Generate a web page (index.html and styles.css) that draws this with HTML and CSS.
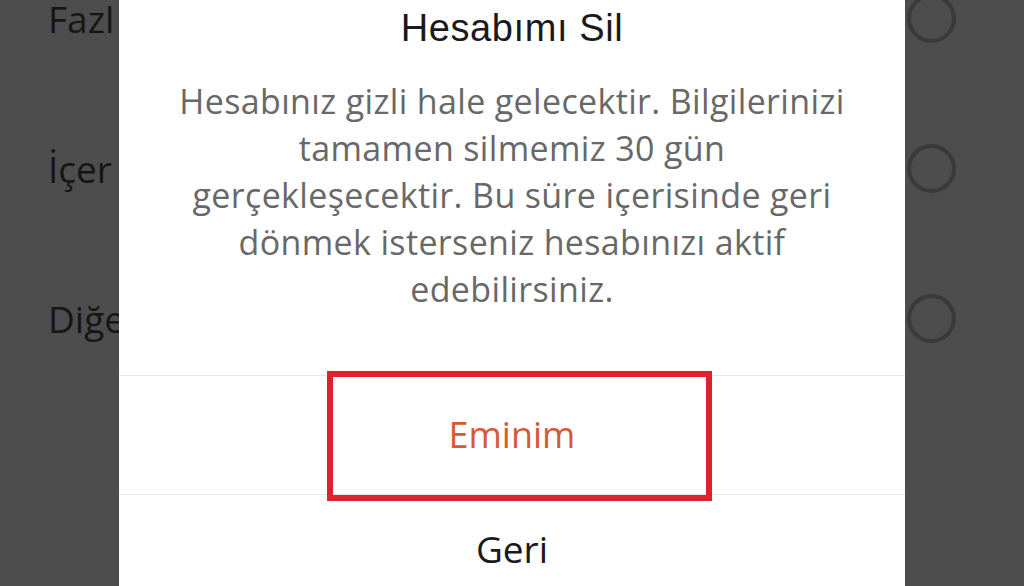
FILE: index.html
```html
<!DOCTYPE html>
<html lang="tr">
<head>
<meta charset="utf-8">
<title>Hesabımı Sil</title>
<link rel="stylesheet" href="styles.css">
</head>
<body>
<div class="screen">
  <ul class="list">
    <li class="row"><span class="label">Fazl</span><span class="radio"></span></li>
    <li class="row"><span class="label">İçer</span><span class="radio"></span></li>
    <li class="row"><span class="label">Diğe</span><span class="radio"></span></li>
  </ul>
  <div class="dialog">
    <h1 class="title">Hesabımı Sil</h1>
    <p class="message">Hesabınız gizli hale gelecektir. Bilgilerinizi<br>tamamen silmemiz 30 gün<br>gerçekleşecektir. Bu süre içerisinde geri<br>dönmek isterseniz hesabınızı aktif<br>edebilirsiniz.</p>
    <div class="action action-confirm">Eminim<span class="highlight"></span></div>
    <div class="action action-back">Geri</div>
  </div>
</div>
</body>
</html>
```
FILE: styles.css
```css
* { box-sizing: border-box; }
html, body {
  margin: 0;
  padding: 0;
  width: 1024px;
  height: 586px;
  overflow: hidden;
  background: #4d4d4d;
}
.screen {
  position: relative;
  width: 1024px;
  height: 586px;
  overflow: hidden;
}
.list {
  list-style: none;
  margin: -57px 0 0 0;
  padding: 0;
  display: flex;
  flex-direction: column;
}
.row {
  height: 150px;
  display: flex;
  align-items: center;
  justify-content: space-between;
  padding: 0 68px 0 48px;
}
.label {
  font-family: "Open Sans", sans-serif;
  font-size: 37px;
  color: #161616;
}
.radio {
  width: 49px;
  height: 49px;
  border-radius: 50%;
  border: 4px solid #3a3a3a;
}
.dialog {
  position: absolute;
  top: 0;
  left: 119px;
  width: 786px;
  height: 586px;
  background: #ffffff;
  display: flex;
  flex-direction: column;
  padding-top: 5px;
}
.title {
  margin: 0;
  font-family: "Liberation Sans", Arial, sans-serif;
  font-weight: 400;
  font-size: 38px;
  line-height: 46px;
  letter-spacing: 0.6px;
  color: #1a1a1a;
  text-align: center;
}
.message {
  margin: 27px 0 0 0;
  padding-bottom: 62px;
  font-family: "Open Sans", sans-serif;
  font-size: 34px;
  line-height: 47px;
  letter-spacing: 0.35px;
  color: #686868;
  text-align: center;
}
.action {
  position: relative;
  border-top: 1px solid #e6e6e6;
  text-align: center;
  font-family: "Open Sans", sans-serif;
}
.action-confirm {
  height: 119px;
  line-height: 118px;
  font-size: 36px;
  font-weight: 500;
  color: #d45c35;
}
.action-back {
  line-height: 108px;
  font-size: 37px;
  color: #1a1a1a;
}
.highlight {
  position: absolute;
  z-index: 2;
  top: -5px;
  left: 208px;
  width: 385px;
  height: 130px;
  border: 6px solid #e0202b;
}
```
